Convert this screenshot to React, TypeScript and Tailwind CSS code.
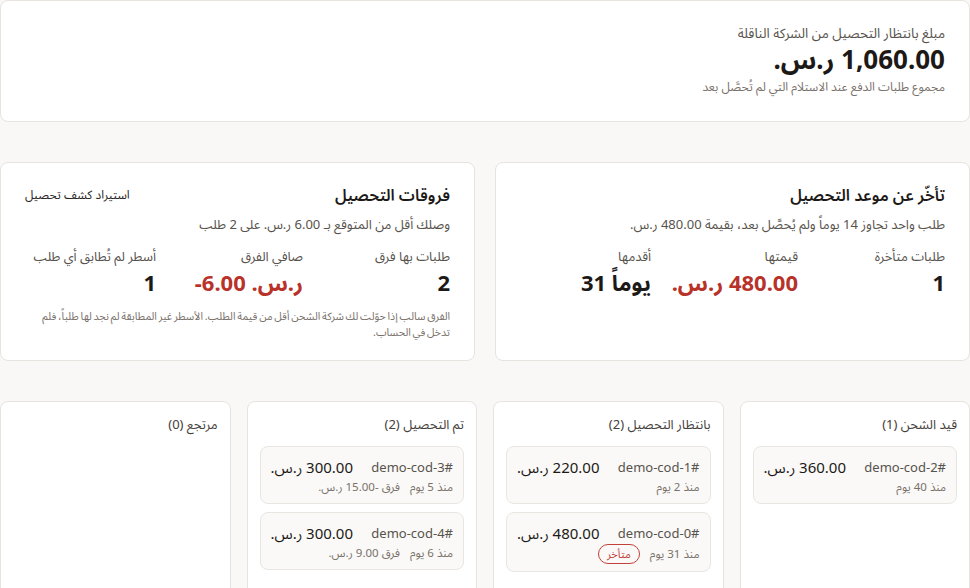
// @ts-nocheck
const font = { fontFamily: '"Noto Sans", "Noto Sans Arabic", "DejaVu Sans", sans-serif' };

function Stat({ label, value, red, ltr }) {
  return (
    <div>
      <div className="text-[13px] leading-4 text-stone-600">{label}</div>
      <div
        className={
          "mt-1 text-[22px] leading-7 font-bold " + (red ? "text-[#b8322a]" : "text-stone-900")
        }
      >
        {ltr ? <span dir="ltr">{value}</span> : value}
      </div>
    </div>
  );
}

function OrderCard({ id, amount, meta, late }) {
  return (
    <div className="rounded-lg border border-[#e9e6e1] bg-[#faf9f7] px-2.5 pt-2.5 pb-2">
      <div className="flex items-center justify-between">
        <span className="text-[13px] leading-5 text-stone-600">{id}</span>
        <span className="text-[15px] leading-5 text-stone-900">{amount}</span>
      </div>
      <div className="mt-0.5 flex items-center gap-2.5 text-[11.5px] leading-4 text-stone-500">
        {meta.map((m) => (
          <span key={m}>{m}</span>
        ))}
        {late && (
          <span className="-my-px rounded-full border border-[#c2413a] px-2 py-px text-[11px] leading-4 text-[#c2413a]">
            متأخر
          </span>
        )}
      </div>
    </div>
  );
}

const columns = [
  {
    title: "قيد الشحن (1)",
    orders: [{ id: "#demo-cod-2", amount: "360.00 ر.س.", meta: ["منذ 40 يوم"] }],
  },
  {
    title: "بانتظار التحصيل (2)",
    orders: [
      { id: "#demo-cod-1", amount: "220.00 ر.س.", meta: ["منذ 2 يوم"] },
      { id: "#demo-cod-0", amount: "480.00 ر.س.", meta: ["منذ 31 يوم"], late: true },
    ],
  },
  {
    title: "تم التحصيل (2)",
    orders: [
      { id: "#demo-cod-3", amount: "300.00 ر.س.", meta: ["منذ 5 يوم", "فرق -15.00 ر.س."] },
      { id: "#demo-cod-4", amount: "300.00 ر.س.", meta: ["منذ 6 يوم", "فرق 9.00 ر.س."] },
    ],
  },
  { title: "مرتجع (0)", orders: [] },
];

export default function App() {
  return (
    <main dir="rtl" style={font} className="min-h-screen w-[970px] bg-[#f9f8f6] text-stone-900">
      <div className="flex flex-col gap-10">
        {/* summary */}
        <section className="rounded-lg border border-[#e7e4df] bg-white px-6 pt-[22px] pb-[24px]">
          <div className="text-[13.5px] leading-5 text-stone-600">مبلغ بانتظار التحصيل من الشركة الناقلة</div>
          <div className="text-[26px] leading-8 font-bold">1,060.00 ر.س.</div>
          <div className="mt-0.5 text-[12px] leading-5 text-stone-500">
            مجموع طلبات الدفع عند الاستلام التي لم تُحصَّل بعد
          </div>
        </section>

        {/* alerts */}
        <div className="grid grid-cols-2 gap-5">
          <section className="rounded-lg border border-[#e7e4df] bg-white px-6 pt-5 pb-5">
            <h2 className="text-[16px] leading-6 font-semibold">تأخّر عن موعد التحصيل</h2>
            <p className="mt-[7px] text-[13px] leading-5 text-stone-600">
              طلب واحد تجاوز 14 يوماً ولم يُحصَّل بعد، بقيمة 480.00 ر.س.
            </p>
            <div className="mt-[14px] grid grid-cols-3 gap-4">
              <Stat label="طلبات متأخرة" value="1" />
              <Stat label="قيمتها" value="480.00 ر.س." red />
              <Stat label="أقدمها" value="31 يوماً" ltr />
            </div>
          </section>

          <section className="rounded-lg border border-[#e7e4df] bg-white px-6 pt-5 pb-5">
            <div className="flex items-center justify-between">
              <h2 className="text-[16px] leading-6 font-semibold">فروقات التحصيل</h2>
              <button className="text-[12px] leading-5 text-stone-800">استيراد كشف تحصيل</button>
            </div>
            <p className="mt-[7px] text-[13px] leading-5 text-stone-600">
              وصلك أقل من المتوقع بـ 6.00 ر.س. على 2 طلب
            </p>
            <div className="mt-[14px] grid grid-cols-3 gap-4">
              <Stat label="طلبات بها فرق" value="2" />
              <div>
                <div className="text-[13px] leading-4 text-stone-600">صافي الفرق</div>
                <div className="mt-1 text-[22px] leading-7 font-bold text-[#b8322a]">
                  <span dir="ltr">
                    -6.00 <bdi dir="rtl">ر.س.</bdi>
                  </span>
                </div>
              </div>
              <Stat label="أسطر لم تُطابق أي طلب" value="1" />
            </div>
            <p className="mt-3 text-[10.7px] leading-4 text-stone-500 [word-spacing:-1px]">
              الفرق سالب إذا حوّلت لك شركة الشحن أقل من قيمة الطلب. الأسطر غير المطابقة لم نجد لها طلباً، فلم
              تدخل في الحساب.
            </p>
          </section>
        </div>

        {/* board */}
        <div className="grid grid-cols-4 gap-4">
          {columns.map((col) => (
            <section
              key={col.title}
              className="min-h-[220px] rounded-lg border border-[#e7e4df] bg-white p-3"
            >
              <h3 className="text-[13px] leading-5 text-stone-700">{col.title}</h3>
              <div className="mt-3 flex flex-col gap-2">
                {col.orders.map((o) => (
                  <OrderCard key={o.id} {...o} />
                ))}
              </div>
            </section>
          ))}
        </div>
      </div>
    </main>
  );
}
